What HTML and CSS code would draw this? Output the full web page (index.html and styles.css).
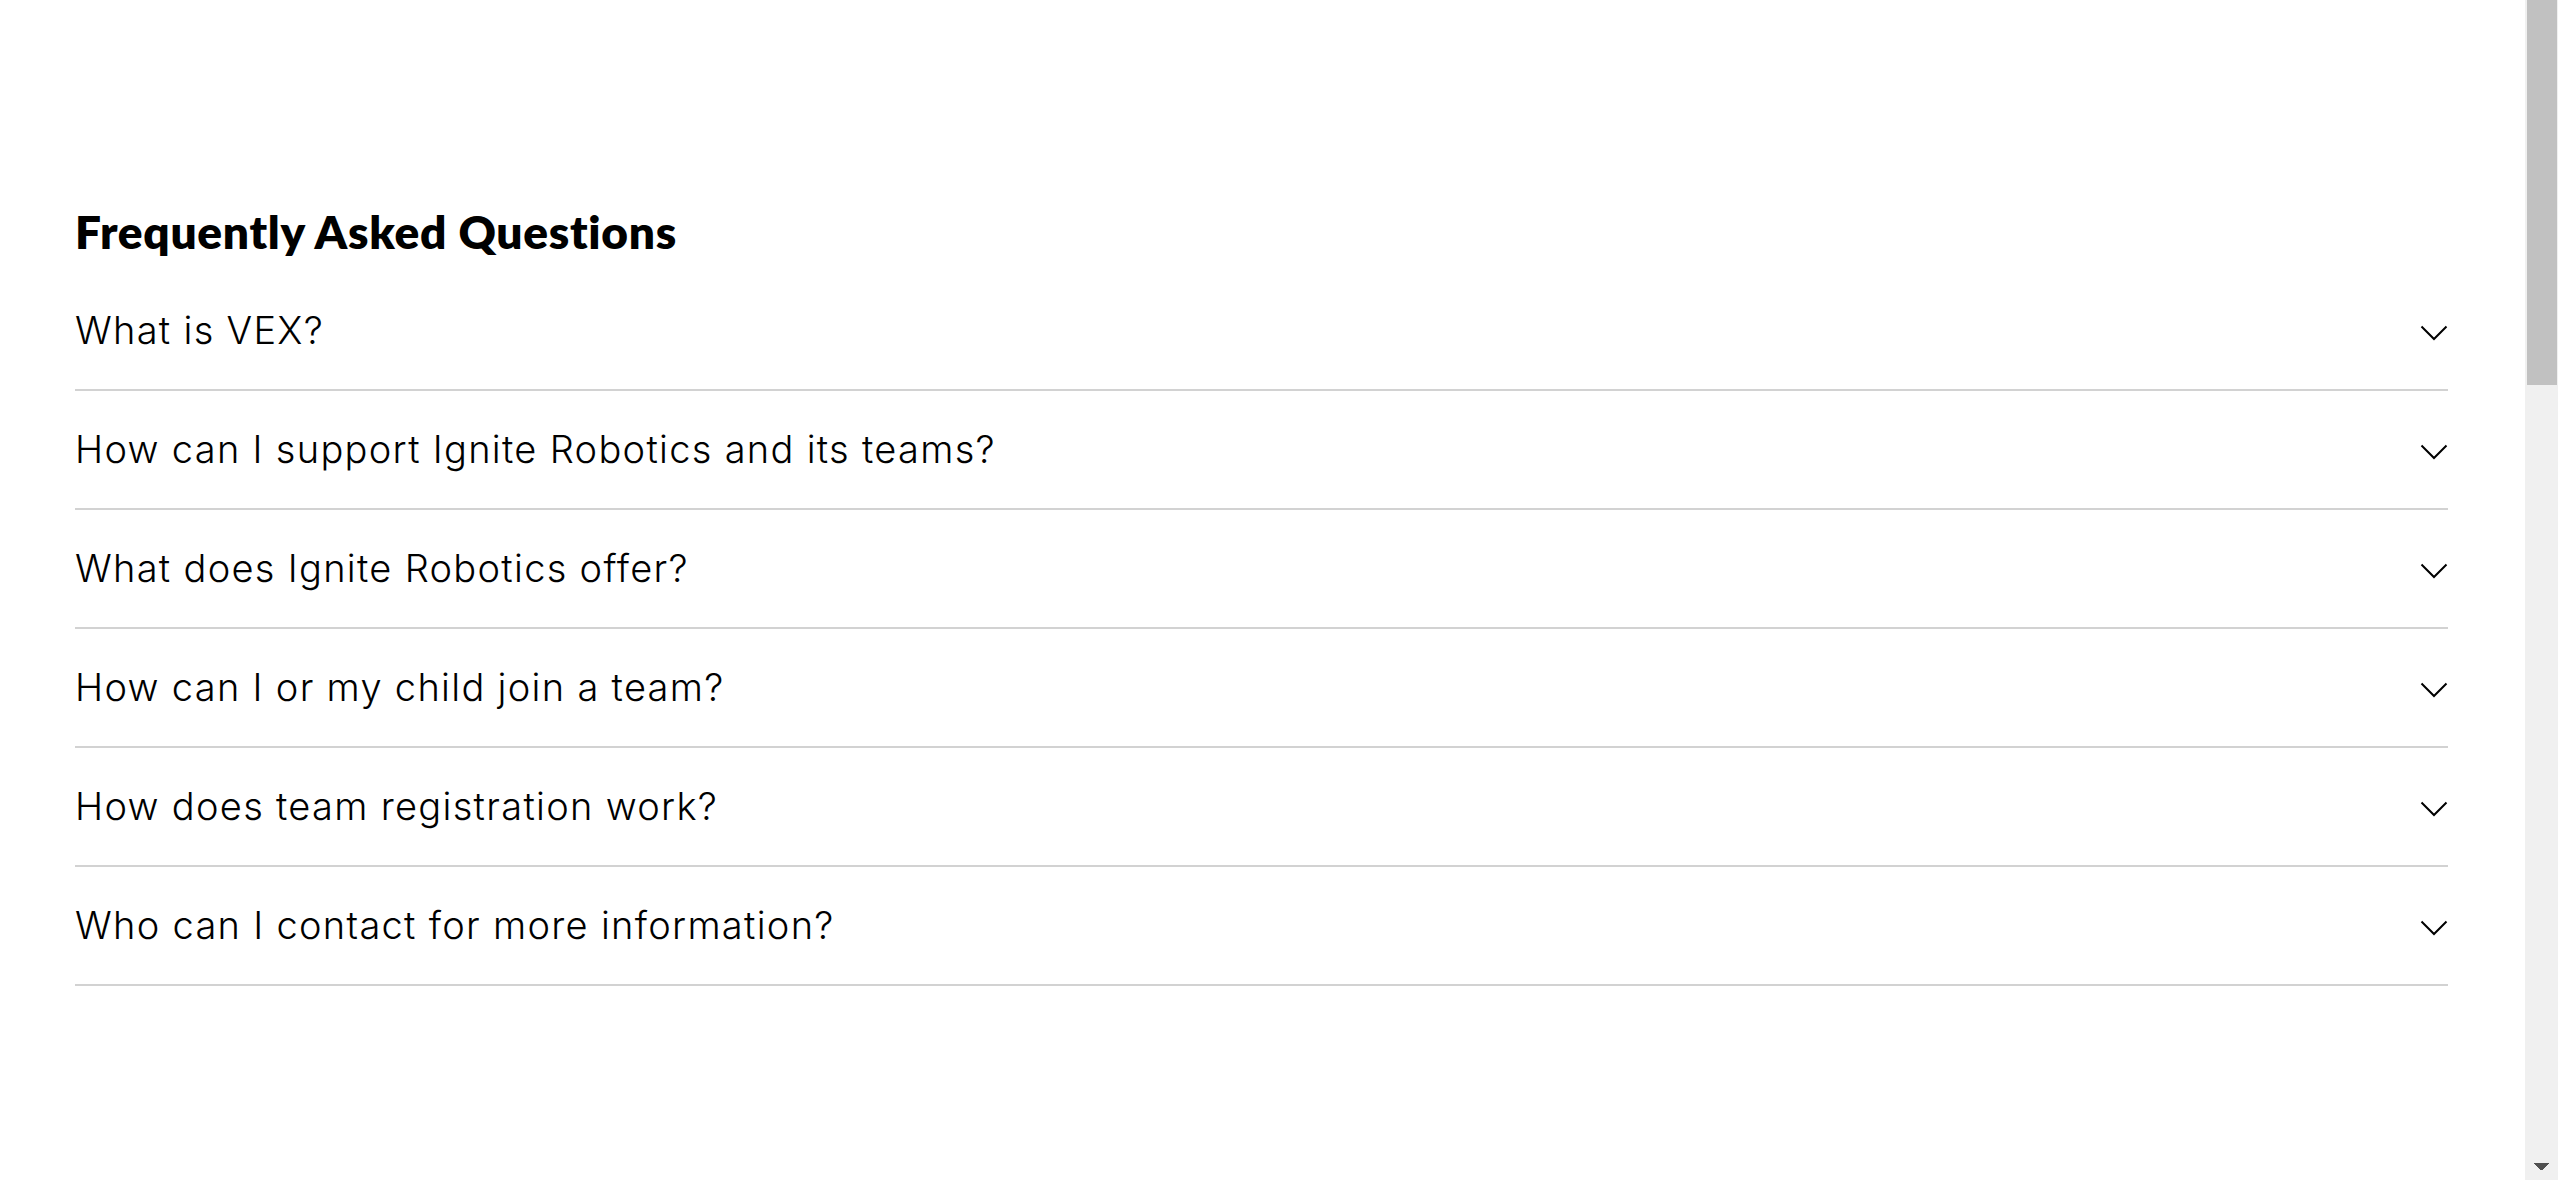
FILE: index.html
```html
<!DOCTYPE html>
<html lang="en">
<head>
<meta charset="utf-8">
<title>Frequently Asked Questions</title>
<link rel="stylesheet" href="styles.css">
</head>
<body>
<main class="page">
  <section class="faq">
    <h2 class="faq-title">Frequently Asked Questions</h2>
    <div class="faq-list">
      <div class="faq-item">
        <span class="faq-q">What is VEX?</span>
        <svg class="chev" width="28" height="16" viewBox="0 0 28 16"><polyline points="1.5,1.5 14,14 26.5,1.5" fill="none" stroke="#000" stroke-width="2"/></svg>
      </div>
      <div class="faq-item">
        <span class="faq-q">How can I support Ignite Robotics and its teams?</span>
        <svg class="chev" width="28" height="16" viewBox="0 0 28 16"><polyline points="1.5,1.5 14,14 26.5,1.5" fill="none" stroke="#000" stroke-width="2"/></svg>
      </div>
      <div class="faq-item">
        <span class="faq-q">What does Ignite Robotics offer?</span>
        <svg class="chev" width="28" height="16" viewBox="0 0 28 16"><polyline points="1.5,1.5 14,14 26.5,1.5" fill="none" stroke="#000" stroke-width="2"/></svg>
      </div>
      <div class="faq-item">
        <span class="faq-q">How can I or my child join a team?</span>
        <svg class="chev" width="28" height="16" viewBox="0 0 28 16"><polyline points="1.5,1.5 14,14 26.5,1.5" fill="none" stroke="#000" stroke-width="2"/></svg>
      </div>
      <div class="faq-item">
        <span class="faq-q">How does team registration work?</span>
        <svg class="chev" width="28" height="16" viewBox="0 0 28 16"><polyline points="1.5,1.5 14,14 26.5,1.5" fill="none" stroke="#000" stroke-width="2"/></svg>
      </div>
      <div class="faq-item">
        <span class="faq-q">Who can I contact for more information?</span>
        <svg class="chev" width="28" height="16" viewBox="0 0 28 16"><polyline points="1.5,1.5 14,14 26.5,1.5" fill="none" stroke="#000" stroke-width="2"/></svg>
      </div>
    </div>
  </section>
</main>
<div class="scrollbar">
  <div class="scroll-thumb"></div>
  <div class="scroll-track"></div>
  <div class="scroll-down"></div>
</div>
</body>
</html>
```
FILE: styles.css
```css
html, body {
  margin: 0;
  padding: 0;
  height: 100%;
  background: #fff;
}
body {
  display: flex;
  overflow: hidden;
  color: #000;
}
.page {
  flex: 1;
  min-width: 0;
}
.faq {
  padding: 207px 77px 0 75px;
}
.faq-title {
  margin: 0 0 15px;
  font-family: "Lato", "Liberation Sans", sans-serif;
  font-weight: 800;
  font-size: 46px;
  line-height: 50px;
  letter-spacing: 0.7px;
}
.faq-list {
  display: flex;
  flex-direction: column;
}
.faq-item {
  height: 117px;
  border-bottom: 2px solid #d2d2d2;
  display: flex;
  align-items: center;
  justify-content: space-between;
}
.faq-q {
  font-family: "Inter", "Liberation Sans", sans-serif;
  font-weight: 300;
  font-size: 38px;
  line-height: 1.2;
  letter-spacing: 1.3px;
}
.chev {
  display: block;
  margin-top: 4px;
}
.scrollbar {
  width: 33px;
  height: 100%;
  background: #f0f0f0;
  display: flex;
  flex-direction: column;
  flex-shrink: 0;
}
.scroll-thumb {
  height: 385px;
  margin: 0 1px 0 2px;
  background: #c1c1c1;
}
.scroll-track {
  flex: 1;
}
.scroll-down {
  height: 33px;
  background:
    linear-gradient(45deg, transparent 50%, #505050 50%) no-repeat calc(50% - 4px) 16px / 8px 8px,
    linear-gradient(-45deg, transparent 50%, #505050 50%) no-repeat calc(50% + 4px) 16px / 8px 8px;
}
```
